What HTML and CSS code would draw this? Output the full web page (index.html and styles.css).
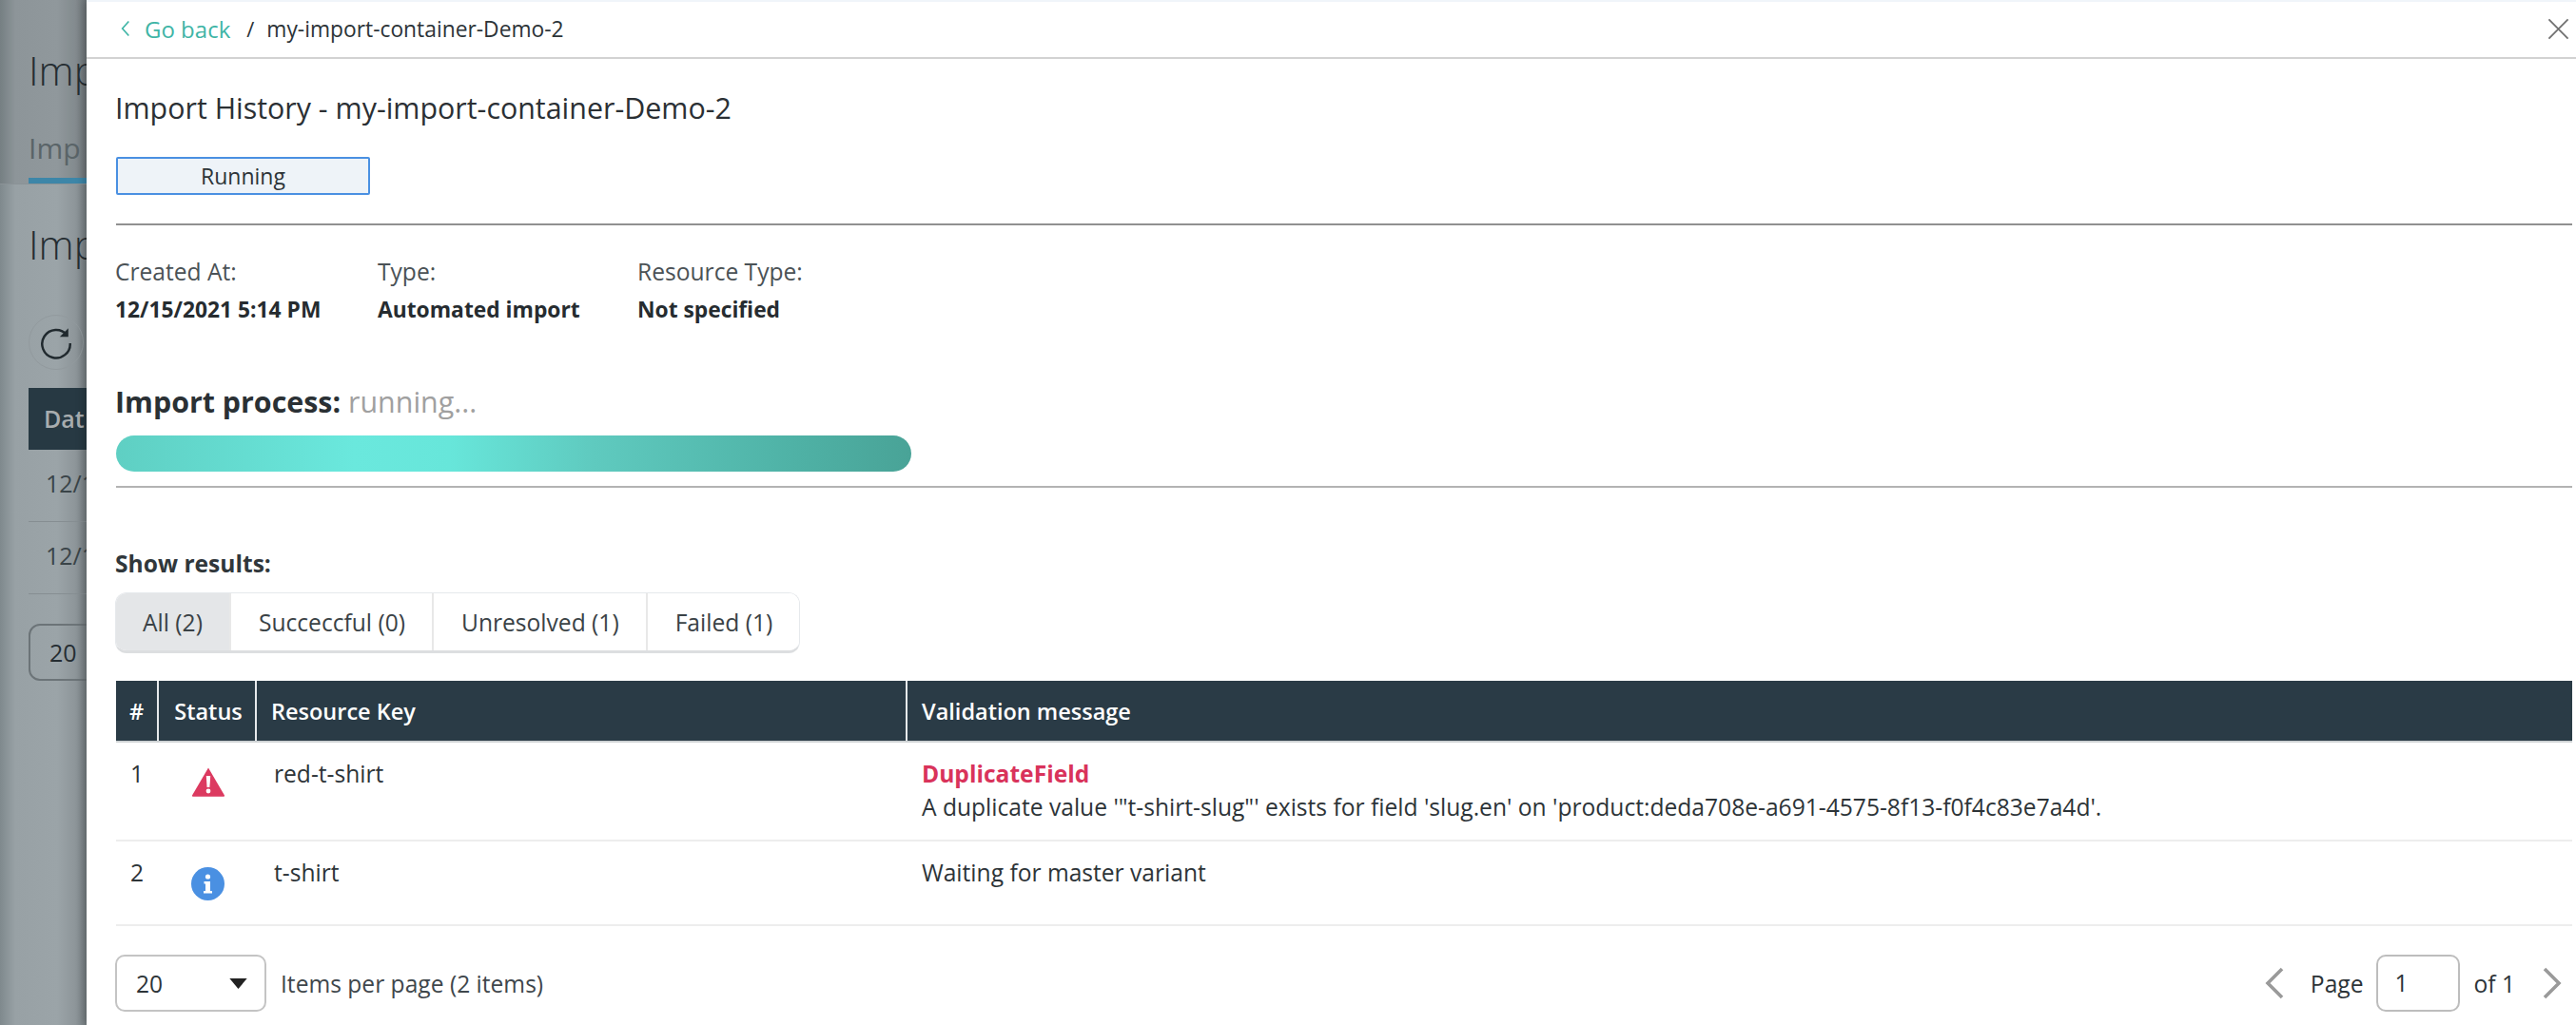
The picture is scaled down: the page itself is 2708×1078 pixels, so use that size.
FILE: index.html
```html
<!DOCTYPE html>
<html lang="en">
<head>
<meta charset="utf-8">
<title>Import History</title>
<link rel="stylesheet" href="styles.css">
</head>
<body>
<div class="app">
  <aside class="backdrop" aria-hidden="true">
    <div class="bd-head">
      <div class="bd-title">Imp</div>
      <div class="bd-tab">Imp</div>
    </div>
    <div class="bd-main">
      <div class="bd-title bd-title-2">Imp</div>
      <div class="bd-refresh">
        <svg viewBox="0 0 40 40" class="bd-refresh-icon"><path d="M32 12A15.5 15.5 0 1 0 35.5 21" fill="none" stroke="#20292e" stroke-width="2.6"/><path d="M33.5 4.500V14H24" fill="#20292e"/></svg>
      </div>
      <div class="bd-thead">Dat</div>
      <div class="bd-row">12/1</div>
      <div class="bd-row">12/1</div>
      <div class="bd-select">20</div>
    </div>
  </aside>
  <main class="panel">
    <header class="topbar">
      <a class="back">
        <svg class="back-icon" viewBox="0 0 12 22"><path d="M10 2L2 11l8 9" fill="none" stroke="#3fb5a6" stroke-width="2"/></svg>
        <span>Go back</span>
      </a>
      <span class="crumb-sep">/</span>
      <span class="crumb">my-import-container-Demo-2</span>
      <svg class="close" viewBox="0 0 24 24"><path d="M1.500 1.500l21 21M22.500 1.500l-21 21" stroke="#6f6f6f" stroke-width="1.8" fill="none"/></svg>
    </header>
    <div class="content">
      <h1 class="title">Import History - my-import-container-Demo-2</h1>
      <div class="badge">Running</div>
      <hr class="rule rule-dark">
      <dl class="meta">
        <div class="meta-col meta-a"><dt>Created At:</dt><dd>12/15/2021 5:14 PM</dd></div>
        <div class="meta-col meta-b"><dt>Type:</dt><dd>Automated import</dd></div>
        <div class="meta-col"><dt>Resource Type:</dt><dd>Not specified</dd></div>
      </dl>
      <div class="process"><strong>Import process:</strong> <span>running...</span></div>
      <div class="progress"></div>
      <hr class="rule rule-mid">
      <div class="show">Show results:</div>
      <div class="tabs">
        <button class="tab tab-active">All (2)</button>
        <button class="tab">Succeccful (0)</button>
        <button class="tab">Unresolved (1)</button>
        <button class="tab">Failed (1)</button>
      </div>
      <table class="results">
        <thead>
          <tr>
            <th class="c-num">#</th>
            <th class="c-status">Status</th>
            <th class="c-key">Resource Key</th>
            <th>Validation message</th>
          </tr>
        </thead>
        <tbody>
          <tr class="row-1">
            <td class="c-num">1</td>
            <td class="c-status">
              <svg class="status-icon" viewBox="0 0 36 32"><path d="M18 1.500L35 30.500a.8.8 0 0 1-.7 1.200H1.700a.8.8 0 0 1-.7-1.200z" fill="#dc3a60"/><path d="M15.800 10h4.400l-.8 12h-2.800z" fill="#fff"/><circle cx="18" cy="26" r="2.400" fill="#fff"/></svg>
            </td>
            <td class="c-key">red-t-shirt</td>
            <td class="c-msg"><div class="err">DuplicateField</div><div>A duplicate value '"t-shirt-slug"' exists for field 'slug.en' on 'product:deda708e-a691-4575-8f13-f0f4c83e7a4d'.</div></td>
          </tr>
          <tr class="row-2">
            <td class="c-num">2</td>
            <td class="c-status">
              <svg class="status-icon info" viewBox="0 0 35 35"><circle cx="17.500" cy="17.500" r="17.500" fill="#4a90e2"/><circle cx="17.500" cy="10" r="2.600" fill="#fff"/><path d="M13.500 15h6.500v10h2v2.500h-9V25h2v-7.500h-1.500z" fill="#fff"/></svg>
            </td>
            <td class="c-key">t-shirt</td>
            <td class="c-msg">Waiting for master variant</td>
          </tr>
        </tbody>
      </table>
      <footer class="pager">
        <div class="per-page">
          <div class="select"><span>20</span><svg class="caret" viewBox="0 0 20 12"><path d="M0 0h20L10 12z" fill="#222"/></svg></div>
          <span>Items per page (2 items)</span>
        </div>
        <div class="pages">
          <svg class="chev" viewBox="0 0 20 34"><path d="M18 2L3 17l15 15" fill="none" stroke="#9a9a9a" stroke-width="3.600"/></svg>
          <span class="page-label">Page</span>
          <div class="page-input">1</div>
          <span class="page-of">of 1</span>
          <svg class="chev" viewBox="0 0 20 34"><path d="M2 2l15 15L2 32" fill="none" stroke="#9a9a9a" stroke-width="3.600"/></svg>
        </div>
      </footer>
    </div>
  </main>
</div>
</body>
</html>
```
FILE: styles.css
```css
* { box-sizing: border-box; }
html, body { margin: 0; height: 100%; }
body {
  font-family: "Open Sans", "Liberation Sans", sans-serif;
  font-size: 24.6px;
  color: #2d3438;
  overflow: hidden;
}
.app { display: flex; width: 2708px; height: 1078px; }

.backdrop {
  width: 91px;
  flex: none;
  overflow: hidden;
  background: linear-gradient(90deg, #7f898d 0, #98a1a5 16px, #9ba4a8 60px, #8d9599 80px, #767e82 91px);
  color: #252d32;
  white-space: nowrap;
}
.bd-head {
  height: 194px;
  padding: 44px 0 0 30px;
  border-bottom: 1px solid #8a9296;
  background: rgba(0, 0, 0, .07);
}
.bd-title { font-size: 42px; line-height: 60px; width: 400px; font-weight: 300; }
.bd-tab {
  margin-top: 31px;
  font-size: 30px;
  line-height: 42px;
  height: 58px;
  width: 300px;
  color: #5a6468;
  border-bottom: 6px solid #3d86a8;
}
.bd-main { padding-left: 30px; }
.bd-title-2 { margin-top: 33px; }
.bd-refresh {
  margin-top: 44px;
  width: 58px;
  height: 58px;
  border-radius: 50%;
  display: flex;
  align-items: center;
  justify-content: center;
  border: 1px solid #929a9e;
}
.bd-refresh-icon { width: 38px; height: 38px; }
.bd-thead {
  margin-top: 19px;
  height: 65px;
  width: 400px;
  padding-left: 16px;
  background: #273943;
  color: #a8adaf;
  font-size: 25px;
  font-weight: 600;
  line-height: 65px;
}
.bd-row {
  width: 400px;
  height: 76px;
  padding-left: 18px;
  font-size: 25px;
  line-height: 70px;
  color: #3a4448;
  border-bottom: 1px solid #868e92;
}
.bd-select {
  margin-top: 31px;
  width: 400px;
  height: 60px;
  padding-left: 20px;
  font-size: 25px;
  line-height: 56px;
  border: 2px solid #6c7478;
  border-radius: 12px;
}

.panel {
  flex: 1;
  min-width: 0;
  background: #fff;
  box-shadow: -3px 0 8px rgba(0, 0, 0, .22);
  border-top: 2px solid #f0f5fa;
  position: relative;
}
.topbar {
  height: 60px;
  display: flex;
  align-items: center;
  padding: 0 7px 2px 36px;
  border-bottom: 2px solid #d2d2d2;
}
.back { display: flex; align-items: center; gap: 15px; color: #3fb5a6; font-size: 24px; }
.back-icon { width: 10px; height: 20px; }
.crumb-sep { margin: 0 13px 0 17px; font-size: 22px; }
.crumb { font-size: 22.8px; }
.close { width: 23px; height: 23px; margin-left: auto; }

.content { padding: 0 4px 0 31px; }
.title { margin: 32px 0 0 -1px; font-size: 30.4px; font-weight: 400; line-height: 40px; color: #2b3034; }
.badge {
  margin-top: 31px;
  width: 267px;
  height: 40px;
  background: #eef3f8;
  border: 2px solid #4a90e2;
  border-radius: 2px;
  text-align: center;
  line-height: 36px;
  font-size: 23px;
}
.rule { margin: 0; border: 0; height: 2px; }
.rule-dark { margin-top: 30px; background: #909090; }
.rule-mid { margin-top: 15px; background: #b3b3b3; }
.meta { display: flex; margin: 31px 0 0 -1px; }
.meta-col { width: 273px; }
.meta-b { width: 273px; }
.meta-a { width: 276px; }
.meta dt { line-height: 36px; color: #4b5256; }
.meta dd { margin: 4px 0 0; line-height: 36px; font-weight: 700; font-size: 22.8px; color: #262c30; }
.process { margin: 61px 0 0 -1px; font-size: 30.4px; line-height: 36px; }
.process strong { color: #2a3034; font-weight: 700; }
.process span { color: #a0a0a0; }
.progress {
  margin-top: 17px;
  width: 836px;
  height: 38px;
  border-radius: 19px;
  background: linear-gradient(90deg, #5fcfc3 0, #6ae8dd 30%, #67e6da 42%, #5fcabf 60%, #4fb2a6 85%, #49a397 100%);
}
.show { margin: 64px 0 0 -1px; font-weight: 700; line-height: 32px; color: #30373b; }
.tabs {
  margin: 14px 0 0 -1px;
  display: inline-flex;
  vertical-align: top;
  height: 64px;
  border: 1px solid #e6e9ec;
  border-bottom: 3px solid #dcdee0;
  border-radius: 12px;
  overflow: hidden;
}
.tab {
  padding: 0 28px 0 29px;
  background: #fff;
  border: 0;
  border-left: 2px solid #e8e8e8;
  font: inherit;
  color: #3a4246;
}
.tab-active { border-left: 0; background: #e4e6e8; padding: 0 28px; }
.results {
  display: table;
  margin-top: 29px;
  width: 2582px;
  border-collapse: collapse;
  table-layout: fixed;
}
.results th {
  height: 64px;
  padding: 0 0 0 15px;
  background: #2a3b46;
  color: #fff;
  font-weight: 600;
  font-size: 23.5px;
  text-align: left;
  border-left: 2px solid #e6e9eb;
  border-bottom: 2px solid #cfd3d5;
}
.results th:first-child { border-left: 0; }
.results td { padding: 15px 0 0 16px; vertical-align: top; line-height: 35px; border-bottom: 2px solid #ededed; }
.row-1 td { height: 104px; }
.row-2 td { height: 89px; }
.results .c-num { width: 44px; padding-left: 0; text-align: center; }
.results .c-status { width: 103px; text-align: center; padding-left: 2px; }
.results th.c-status { padding-left: 3px; }
.results .c-key { width: 684px; }
.results td.c-key { padding-left: 19px; }
.results td.c-msg { padding-left: 16px; }
.err { color: #d9335b; font-weight: 700; }
.status-icon { width: 36px; height: 32px; display: block; margin: 10px auto 0; }
.status-icon.info { width: 35px; height: 35px; margin-top: 12px; }
.pager { display: flex; justify-content: space-between; align-items: center; margin-top: 30px; }
.per-page { display: flex; align-items: center; gap: 15px; margin-left: -1px; color: #3f474c; }
.select {
  width: 159px;
  height: 60px;
  padding: 0 18px 0 20px;
  display: flex;
  align-items: center;
  justify-content: space-between;
  border: 2px solid #c4c4c4;
  border-radius: 10px;
  color: #2d3438;
}
.caret { width: 19px; height: 11px; }
.pages { display: flex; align-items: center; margin-right: 11px; }
.chev { width: 20px; height: 34px; }
.page-label { margin: 0 14px 0 28px; }
.page-input {
  width: 88px;
  height: 60px;
  padding-left: 17px;
  line-height: 56px;
  border: 2px solid #bdbdbd;
  border-radius: 10px;
}
.page-of { margin: 0 29px 0 14px; }
```
